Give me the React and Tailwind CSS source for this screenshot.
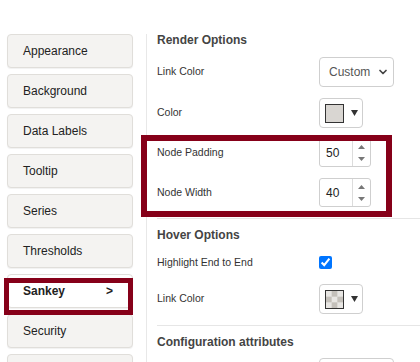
// App.jsx - Sankey chart settings panel
import { ChevronDown } from 'lucide-react'

const menu = ['Appearance', 'Background', 'Data Labels', 'Tooltip', 'Series', 'Thresholds', 'Sankey', 'Security', '']

function Caret() {
  return (
    <svg width="7" height="6" viewBox="0 0 7 6" className="ml-[7px]">
      <path d="M0 0 H7 L3.5 6 Z" fill="#333" />
    </svg>
  )
}

function ColorButton({ checkered }) {
  return (
    <div className="w-[44px] h-[30px] border border-[#cfcfcf] rounded-[4px] bg-white flex items-center pl-[5px]">
      <div className="w-[19px] h-[19px] border border-[#333] bg-[#d9d6d2]">
        {checkered && (
          <svg width="17" height="17" viewBox="0 0 3 3" className="block">
            <rect width="3" height="3" fill="#e8e6e3" />
            <rect x="1" y="0" width="1" height="1" fill="#c4c0ba" />
            <rect x="0" y="1" width="1" height="1" fill="#c4c0ba" />
            <rect x="2" y="1" width="1" height="1" fill="#c4c0ba" />
            <rect x="1" y="2" width="1" height="1" fill="#c4c0ba" />
          </svg>
        )}
      </div>
      <Caret />
    </div>
  )
}

function NumberBox({ value }) {
  return (
    <div className="w-[52px] h-[29px] border border-[#cfcfcf] rounded-[3px] bg-white flex">
      <div className="flex-1 flex items-center pl-[6px] text-[12px] text-[#222]">{value}</div>
      <div className="w-[18px] border-l border-[#dcdcdc] flex flex-col items-center justify-center gap-[8px]">
        <svg width="7" height="4" viewBox="0 0 7 4"><path d="M0 4 H7 L3.5 0 Z" fill="#777" /></svg>
        <svg width="7" height="4" viewBox="0 0 7 4"><path d="M0 0 H7 L3.5 4 Z" fill="#777" /></svg>
      </div>
    </div>
  )
}

function Row({ label, className = '', children }) {
  return (
    <div className={`grid grid-cols-[162px_1fr] items-center ${className}`}>
      <span className="text-[10.5px] text-[#333]">{label}</span>
      <div className="flex">{children}</div>
    </div>
  )
}

export default function App() {
  return (
    <div className="relative w-[420px] h-[362px] overflow-hidden bg-white flex font-['Liberation_Sans',Arial,sans-serif]">
      {/* Side menu */}
      <div className="w-[146px] shrink-0 pl-[7px] pt-[34px] flex flex-col gap-[6px]">
        {menu.map((item, i) => (
          <div
            key={i}
            className={`w-[126px] h-[34px] shrink-0 rounded-[4px] border border-[#e0deda] shadow-[0_1px_1px_rgba(0,0,0,0.06)] flex items-center justify-between pl-[15px] pr-[19px] text-[12px] text-[#222] ${
              item === 'Sankey' ? 'bg-white font-bold' : 'bg-[#f4f3f1]'
            }`}
          >
            <span>{item}</span>
            {item === 'Sankey' && <span className="font-bold">&gt;</span>}
          </div>
        ))}
      </div>

      {/* Options */}
      <div className="flex-1 mt-[34px] border-l border-[#e8e8e8] pl-[10px]">
        <div className="h-[14px] -mt-[1px] flex items-center text-[12px] font-bold text-[#444]">Render Options</div>
        <Row label="Link Color" className="h-[30px] mt-[10px]">
          <div className="w-[75px] h-[30px] border border-[#cfcfcf] rounded-[4px] bg-white flex items-center justify-between pl-[9px] pr-[4px] text-[12px] text-[#555]">
            <span>Custom</span>
            <ChevronDown size={12} strokeWidth={3.5} color="#444" />
          </div>
        </Row>
        <Row label="Color" className="h-[30px] mt-[11px]">
          <ColorButton />
        </Row>
        <Row label="Node Padding" className="h-[29px] mt-[10px]">
          <NumberBox value="50" />
        </Row>
        <Row label="Node Width" className="h-[29px] mt-[11px]">
          <NumberBox value="40" />
        </Row>
        <div className="mt-[11px] h-px bg-[#e6e6e6]" />

        <div className="h-[14px] mt-[9px] flex items-center text-[12px] font-bold text-[#444]">Hover Options</div>
        <Row label="Highlight End to End" className="h-[13px] mt-[13px]">
          <input type="checkbox" defaultChecked className="w-[13px] h-[13px] m-0 accent-[#0075ff]" />
        </Row>
        <Row label="Link Color" className="h-[30px] mt-[16px]">
          <ColorButton checkered />
        </Row>
        <div className="mt-[11px] h-px bg-[#e6e6e6]" />

        <div className="h-[14px] mt-[9px] flex items-center text-[12px] font-bold text-[#444]">Configuration attributes</div>
        <div className="grid grid-cols-[162px_1fr] mt-[9px]">
          <span />
          <div className="w-[75px] h-[30px] border border-[#cfcfcf] rounded-[4px] bg-white" />
        </div>
      </div>

      {/* Highlight annotations */}
      <div className="absolute left-[4px] top-[278px] w-[129px] h-[37px] border-[5px] border-[#860019] pointer-events-none" />
      <div className="absolute left-[141px] top-[135px] w-[251px] h-[82px] border-[6px] border-[#860019] pointer-events-none" />
    </div>
  )
}
